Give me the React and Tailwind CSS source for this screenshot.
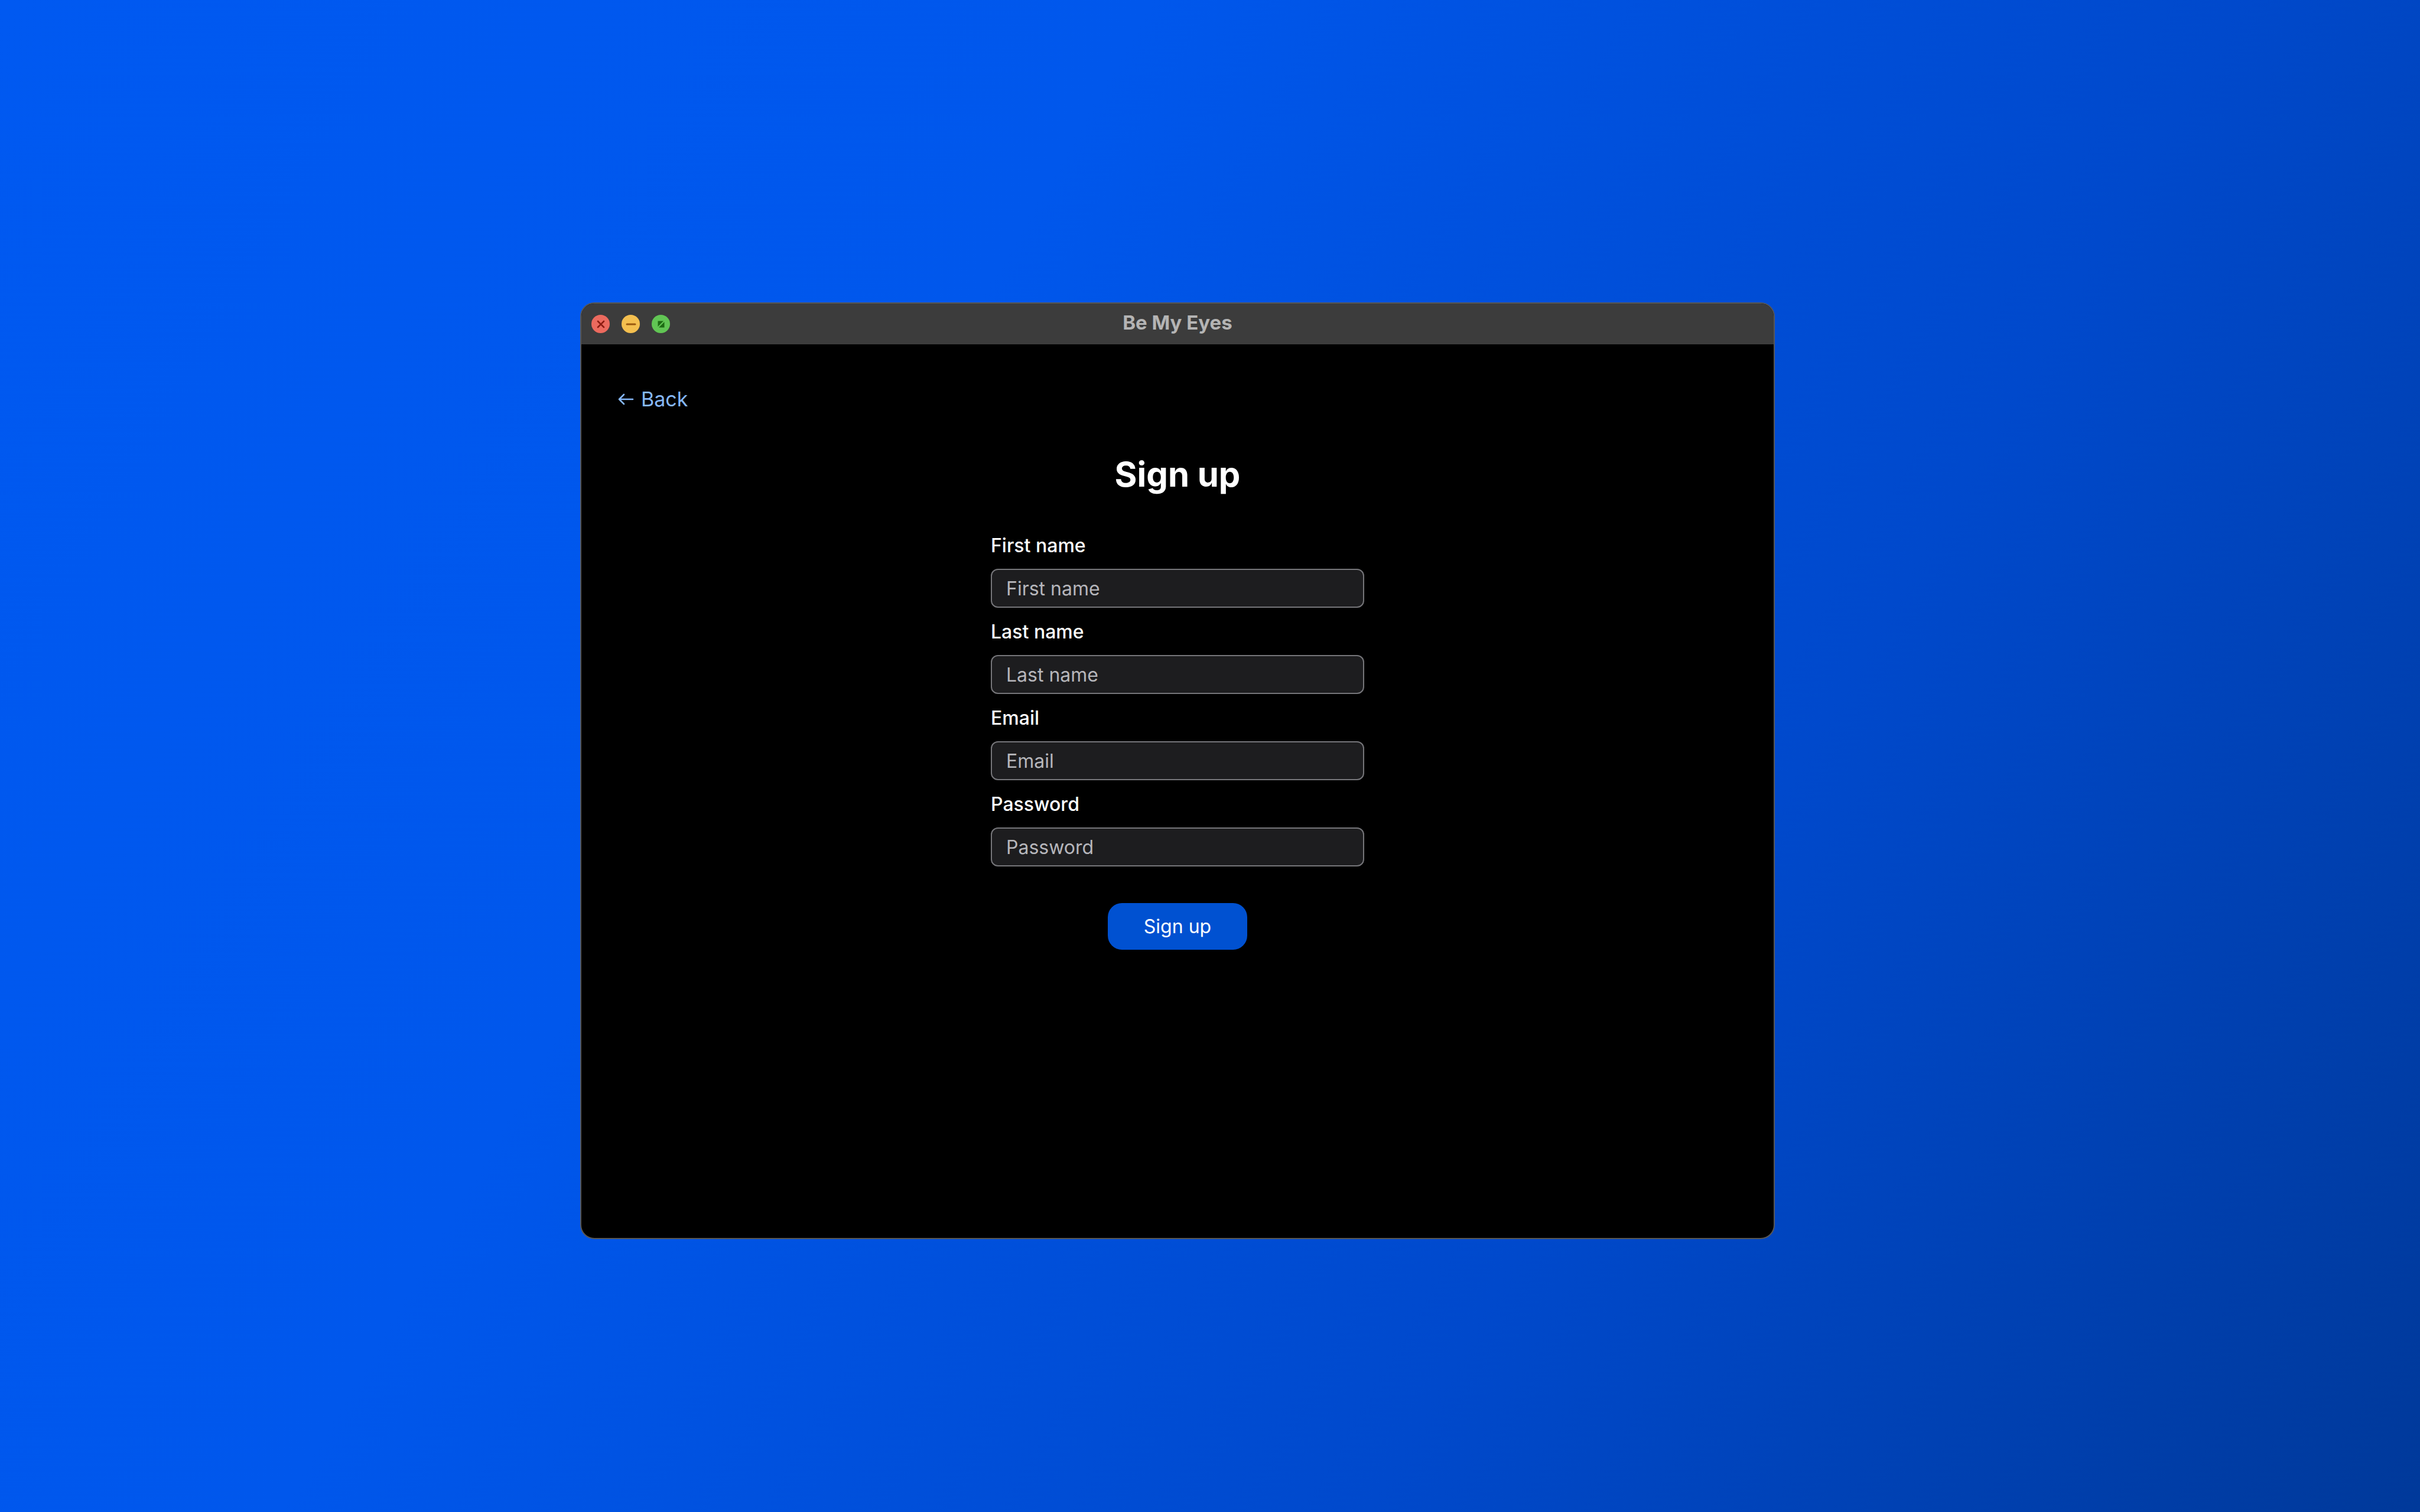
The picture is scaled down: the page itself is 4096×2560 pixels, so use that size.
import React from "react";

function TrafficLights() {
  return (
    <div className="flex items-center gap-[20px]">
      <div className="w-[31px] h-[31px] rounded-full bg-[#ec6a5e] flex items-center justify-center">
        <svg width="18" height="18" viewBox="0 0 18 18">
          <path d="M4 4 L14 14 M14 4 L4 14" stroke="#8d1c12" strokeWidth="2.6" strokeLinecap="round" />
        </svg>
      </div>
      <div className="w-[31px] h-[31px] rounded-full bg-[#f4bf4f] flex items-center justify-center">
        <svg width="20" height="18" viewBox="0 0 20 18">
          <path d="M3 9 L17 9" stroke="#99590f" strokeWidth="3" strokeLinecap="round" />
        </svg>
      </div>
      <div className="w-[31px] h-[31px] rounded-full bg-[#61c554] flex items-center justify-center">
        <svg width="18" height="18" viewBox="0 0 18 18">
          <polygon points="3.5,3.5 13,3.5 3.5,13" fill="#1c6a13" />
          <polygon points="14.5,14.5 5,14.5 14.5,5" fill="#1c6a13" />
        </svg>
      </div>
    </div>
  );
}

function Field({ label, placeholder, type = "text" }) {
  return (
    <div className="flex flex-col">
      <label className="text-[32px] leading-[38px] font-medium text-white mb-[20px]">{label}</label>
      <input
        type={type}
        placeholder={placeholder}
        className="h-[66px] w-full rounded-[12px] border-2 border-[#76767a] bg-[#1d1d1f] px-[24px] text-[32px] text-white placeholder:text-[#b6b6bb] outline-none"
      />
    </div>
  );
}

export default function App() {
  return (
    <div
      className="w-[4096px] h-[2560px] bg-[linear-gradient(120deg,#0059f1_0%,#0057ec_35%,#0049cc_68%,#00399a_100%)] pt-[512px] pl-[982px]"
      style={{ fontFamily: "Inter, 'Noto Sans', sans-serif" }}
    >
      <div className="w-[2022px] h-[1586px] rounded-[24px] border-2 border-[#575757] bg-black overflow-hidden flex flex-col">
        <div className="relative h-[69px] bg-[#3c3c3c] flex items-center pl-[17px] shrink-0">
          <TrafficLights />
          <div className="absolute inset-0 flex items-center justify-center pb-[3px] pointer-events-none">
            <span className="text-[33px] font-bold text-[#b4b4b4]">Be My Eyes</span>
          </div>
        </div>
        <div className="flex-1 flex flex-col pt-[72px]">
          <div className="pl-[61px]">
            <button className="flex items-center gap-[12px] text-[34px] leading-[42px] text-[#86b8f9]">
              <svg width="28" height="22" viewBox="0 0 28 22" fill="none">
                <path d="M26 11 H3 M11 3 L3 11 L11 19" stroke="#86b8f9" strokeWidth="2.6" strokeLinecap="round" strokeLinejoin="round" />
              </svg>
              <span>Back</span>
            </button>
          </div>
          <h1 className="mt-[71px] text-center text-[58px] leading-[70px] font-bold text-white">Sign up</h1>
          <div className="mt-[67px] w-[632px] self-center flex flex-col gap-[22px]">
            <Field label="First name" placeholder="First name" />
            <Field label="Last name" placeholder="Last name" />
            <Field label="Email" placeholder="Email" type="email" />
            <Field label="Password" placeholder="Password" type="password" />
          </div>
          <div className="mt-[62px] flex justify-center">
            <button className="w-[236px] h-[79px] rounded-[24px] bg-[#0051d1] text-white text-[32px]">
              Sign up
            </button>
          </div>
        </div>
      </div>
    </div>
  );
}
